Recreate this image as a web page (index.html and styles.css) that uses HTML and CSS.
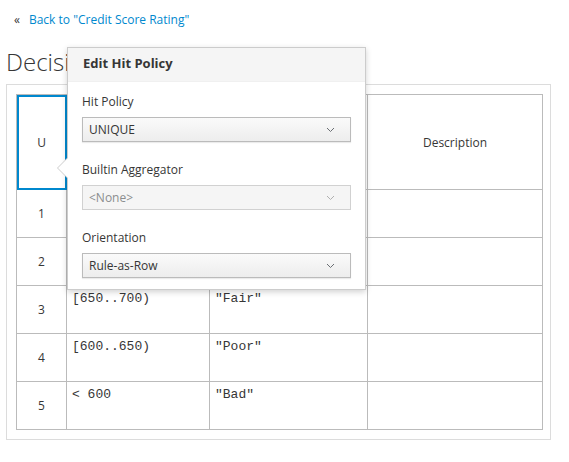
FILE: index.html
```html
<!DOCTYPE html>
<html>
<head>
<meta charset="utf-8">
<link rel="stylesheet" href="styles.css">
</head>
<body>
<div class="page">
  <a class="back" href="#"><span class="back-icon">«</span>Back to "Credit Score Rating"</a>
  <h1 class="title">Decisi</h1>
  <div class="card">
    <table class="dt">
      <colgroup>
        <col class="c-num"><col class="c-in"><col class="c-out"><col class="c-desc">
      </colgroup>
      <thead>
        <tr>
          <th class="hp selected">U</th>
          <th></th>
          <th></th>
          <th>Description</th>
        </tr>
      </thead>
      <tbody>
        <tr><td class="num">1</td><td class="code"></td><td class="code"></td><td></td></tr>
        <tr><td class="num">2</td><td class="code"></td><td class="code"></td><td></td></tr>
        <tr><td class="num">3</td><td class="code">[650..700)</td><td class="code">"Fair"</td><td></td></tr>
        <tr><td class="num">4</td><td class="code">[600..650)</td><td class="code">"Poor"</td><td></td></tr>
        <tr><td class="num">5</td><td class="code">&lt; 600</td><td class="code">"Bad"</td><td></td></tr>
      </tbody>
    </table>
  </div>

  <div class="popover">
    <div class="popover-title">Edit Hit Policy</div>
    <div class="popover-body">
      <div class="field">
        <div class="label">Hit Policy</div>
        <div class="select"><span>UNIQUE</span><svg class="chev" width="9" height="6" viewBox="0 0 9 6"><polyline points="1,1 4.5,4.5 8,1" fill="none" stroke="#6a6e73" stroke-width="1"/></svg></div>
      </div>
      <div class="field">
        <div class="label">Builtin Aggregator</div>
        <div class="select disabled"><span>&lt;None&gt;</span><svg class="chev" width="9" height="6" viewBox="0 0 9 6"><polyline points="1,1 4.5,4.5 8,1" fill="none" stroke="#b0b0b0" stroke-width="1"/></svg></div>
      </div>
      <div class="field">
        <div class="label">Orientation</div>
        <div class="select"><span>Rule-as-Row</span><svg class="chev" width="9" height="6" viewBox="0 0 9 6"><polyline points="1,1 4.5,4.5 8,1" fill="none" stroke="#6a6e73" stroke-width="1"/></svg></div>
      </div>
    </div>
  </div>
</div>
</body>
</html>
```

FILE: styles.css
```css
* { box-sizing: border-box; }
html, body { margin: 0; padding: 0; background: #fff; }
body {
  font-family: "Open Sans", "Liberation Sans", sans-serif;
  font-size: 12px;
  color: #363636;
}
.page {
  position: relative;
  padding: 12px 18px 0 6px;
  width: 569px;
  height: 462px;
}
.back {
  display: flex;
  align-items: center;
  height: 16px;
  margin-left: 8px;
  color: #0088ce;
  text-decoration: none;
  font-size: 12px;
  line-height: 16px;
}
.back-icon {
  color: #363636;
  font-size: 12px;
  margin-right: 9px;
}
.title {
  margin: 20px 0 8px 0;
  font-size: 24px;
  line-height: 28px;
  font-weight: 300;
  color: #363636;
}
.card {
  border: 1px solid #dcdcdc;
  padding: 9px 9px 9px 9px;
}
.dt {
  border-collapse: collapse;
  width: 526px;
  table-layout: fixed;
}
.c-num { width: 50px; }
.c-in { width: 143px; }
.c-out { width: 158px; }
.c-desc { width: 175px; }
.dt th, .dt td {
  border: 1px solid #bbbbbb;
  padding: 0;
}
.dt th {
  height: 95px;
  font-weight: 400;
  text-align: center;
  vertical-align: middle;
  font-size: 12px;
}
.dt th.selected {
  outline: 2px solid #0088ce;
  outline-offset: -2px;
}
.dt td { height: 48px; }
.dt td.num {
  text-align: center;
  vertical-align: middle;
}
.dt td.code {
  font-family: "Liberation Mono", "DejaVu Sans Mono", monospace;
  font-size: 13px;
  vertical-align: top;
  padding: 5px 5px 4px 5px;
  line-height: 16px;
}

.popover {
  position: absolute;
  left: 67px;
  top: 47px;
  width: 299px;
  background: #fff;
  border: 1px solid #cccccc;
  box-shadow: 0 2px 6px rgba(0, 0, 0, 0.18);
}
.popover::before,
.popover::after {
  content: "";
  position: absolute;
  top: 110px;
  width: 0;
  height: 0;
  border-style: solid;
}
.popover::before {
  left: -11px;
  border-width: 10px 10px 10px 0;
  border-color: transparent #cccccc transparent transparent;
}
.popover::after {
  left: -10px;
  border-width: 10px 10px 10px 0;
  border-color: transparent #ffffff transparent transparent;
}
.popover-title {
  background: #f5f5f5;
  height: 34px;
  padding: 0 15px 3px 15px;
  display: flex;
  align-items: center;
  font-size: 13px;
  font-weight: 700;
  color: #363636;
  border-bottom: 1px solid #f0f0f0;
}
.popover-body {
  padding: 12px 14px 11px 14px;
  display: flex;
  flex-direction: column;
  gap: 20px;
}
.label {
  line-height: 16px;
  margin-bottom: 7px;
  color: #363636;
}
.select {
  height: 25px;
  border: 1px solid #bbbbbb;
  background: linear-gradient(#fafafa, #ededed);
  box-shadow: 0 1px 1px rgba(3, 3, 3, 0.08);
  display: flex;
  align-items: center;
  justify-content: space-between;
  padding: 0 15px 0 6px;
  color: #363636;
}
.select.disabled {
  background: #f5f5f5;
  border-color: #d1d1d1;
  box-shadow: none;
  color: #8b8d8f;
}
.chev { display: block; }
```
